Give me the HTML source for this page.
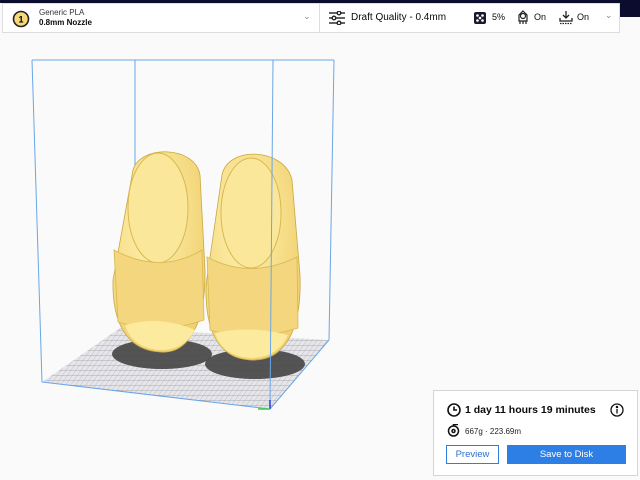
<!DOCTYPE html>
<html><head><meta charset="utf-8"><style>
body{margin:0;width:640px;height:480px;background:#fafafa;font-family:"Liberation Sans",sans-serif;position:relative;overflow:hidden;color:#0a0a0a}
.top{position:absolute;left:0;top:0;width:640px;height:3px;background:#0b0c2e}
.topr{position:absolute;left:620px;top:0;width:20px;height:17px;background:#0b0c2e}
.hdr{position:absolute;left:2px;top:3px;width:618px;height:30px;background:#fff;border:1px solid #ddd;box-sizing:border-box}
.t{position:absolute;white-space:nowrap}
.card{position:absolute;left:433px;top:390px;width:205px;height:86px;background:#fff;border:1px solid #d5d5d5;box-sizing:border-box}
</style></head><body>
<div class="top"></div><div class="topr"></div>
<div class="hdr">
 <svg style="position:absolute;left:9px;top:6px" width="18" height="18"><circle cx="9" cy="9" r="7.5" fill="#f5d97a" stroke="#222" stroke-width="1.6"/><text x="9" y="12.5" font-size="9" text-anchor="middle" font-family="Liberation Sans" font-weight="bold">1</text></svg>
 <div class="t" style="left:36px;top:4px;font-size:8px;color:#333">Generic PLA</div>
 <div class="t" style="left:36px;top:14px;font-size:8px;font-weight:bold">0.8mm Nozzle</div>
 <div class="t" style="left:300px;top:7px;font-size:9px;color:#888">⌄</div>
 <div style="position:absolute;left:316px;top:0;width:1px;height:28px;background:#ddd"></div>
 <svg style="position:absolute;left:326px;top:7px" width="16" height="14" stroke="#222" stroke-width="1.4"><line x1="0" y1="2" x2="16" y2="2"/><line x1="0" y1="7" x2="16" y2="7"/><line x1="0" y1="12" x2="16" y2="12"/><circle cx="10" cy="2" r="1.8" fill="#fff"/><circle cx="5" cy="7" r="1.8" fill="#fff"/><circle cx="10" cy="12" r="1.8" fill="#fff"/></svg>
 <div class="t" style="left:348px;top:8px;font-size:10px">Draft Quality - 0.4mm</div>
 <svg style="position:absolute;left:471px;top:8px" width="12" height="12"><rect width="12" height="12" rx="2" fill="#1a1a2e"/><circle cx="3.5" cy="3.5" r="1.3" fill="#fff"/><circle cx="8.5" cy="3.5" r="1.3" fill="#fff"/><circle cx="6" cy="6" r="1.3" fill="#fff"/><circle cx="3.5" cy="8.5" r="1.3" fill="#fff"/><circle cx="8.5" cy="8.5" r="1.3" fill="#fff"/></svg>
 <div class="t" style="left:489px;top:8px;font-size:9px">5%</div>
 <svg style="position:absolute;left:513px;top:6px" width="14" height="15" fill="none" stroke="#222" stroke-width="1.2"><path d="M7 1 L11 5 L11 11 L3 11 L3 5Z"/><circle cx="7" cy="6" r="2.5"/><path d="M4 11v3M7 11v3M10 11v3"/></svg>
 <div class="t" style="left:531px;top:8px;font-size:9px">On</div>
 <svg style="position:absolute;left:556px;top:6px" width="14" height="15" fill="none" stroke="#222" stroke-width="1.3"><path d="M7 1v7M4 5l3 3 3-3"/><path d="M1 8v3h12V8"/><path d="M1 13.5h12" stroke-dasharray="1.5 1"/></svg>
 <div class="t" style="left:574px;top:8px;font-size:9px">On</div>
 <div class="t" style="left:602px;top:6px;font-size:9px;color:#888">⌄</div>
</div>

<svg style="position:absolute;left:0;top:0" width="640" height="480">
 <defs>
  <pattern id="g" width="5" height="5" patternUnits="userSpaceOnUse" patternTransform="skewX(-35)"><rect width="5" height="5" fill="#e6e6ea"/><path d="M0 0H5M0 0V5" stroke="#8a8a95" stroke-width="0.5"/></pattern>
  <radialGradient id="y" cx="0.4" cy="0.35" r="0.7"><stop offset="0" stop-color="#fff2b0"/><stop offset="1" stop-color="#f0d070"/></radialGradient>
 </defs>
 <polygon points="42,382 120,328 329,340 270,409" fill="url(#g)"/>
 <g stroke="#6aa6e6" stroke-width="1" fill="none">
  <line x1="32" y1="60" x2="334" y2="60"/><line x1="32" y1="60" x2="42" y2="382"/>
  <line x1="334" y1="60" x2="329" y2="340"/><line x1="135" y1="60" x2="135" y2="330"/>
  <line x1="42" y1="382" x2="270" y2="409"/><line x1="270" y1="409" x2="329" y2="340"/>
 </g>
 <ellipse cx="162" cy="354" rx="50" ry="15" fill="#444" opacity="0.9"/>
 <ellipse cx="255" cy="364" rx="50" ry="15" fill="#444" opacity="0.9"/>
 <path d="M133 170 C140 145 195 145 200 175 L205 270 C206 320 190 355 160 352 C125 350 112 320 113 280 Z" fill="url(#y)" stroke="#c9a840" stroke-width="0.8"/>
 <ellipse cx="158" cy="208" rx="30" ry="55" fill="#fbe79a" stroke="#d8b850" stroke-width="1"/>
 <path d="M114 250 Q160 275 202 250 L204 320 Q160 335 118 322Z" fill="#f3d67d" stroke="#d8b850" stroke-width="0.8"/>
 <path d="M125 325 Q160 315 195 330 Q185 350 160 350 Q132 348 125 325Z" fill="#fcea9e"/>
 <path d="M222 175 C228 145 285 148 292 180 L300 275 C302 330 285 362 250 360 C215 358 205 325 206 285 Z" fill="url(#y)" stroke="#c9a840" stroke-width="0.8"/>
 <ellipse cx="251" cy="213" rx="30" ry="55" fill="#fbe79a" stroke="#d8b850" stroke-width="1"/>
 <path d="M207 257 Q250 280 297 257 L298 328 Q250 343 210 330Z" fill="#f3d67d" stroke="#d8b850" stroke-width="0.8"/>
 <path d="M215 333 Q250 325 288 335 Q278 358 250 358 Q222 356 215 333Z" fill="#fcea9e"/>
 <line x1="273" y1="60" x2="270" y2="409" stroke="#6aa6e6" stroke-width="1"/>
 <line x1="270" y1="400" x2="270" y2="409" stroke="#2040e0" stroke-width="1.5"/>
 <line x1="258" y1="409" x2="270" y2="409" stroke="#40d040" stroke-width="1.5"/>
</svg>

<div class="card">
 <svg style="position:absolute;left:13px;top:12px" width="14" height="14" fill="none" stroke="#111" stroke-width="1.6"><circle cx="7" cy="7" r="6"/><path d="M7 3.5V7H10"/></svg>
 <div class="t" style="left:31px;top:13px;font-size:10.5px;font-weight:bold">1 day 11 hours 19 minutes</div>
 <svg style="position:absolute;left:176px;top:12px" width="14" height="14" fill="none" stroke="#111" stroke-width="1.3"><circle cx="7" cy="7" r="6"/><path d="M7 6v4.5"/><circle cx="7" cy="4" r="0.6" fill="#111"/></svg>
 <svg style="position:absolute;left:13px;top:33px" width="13" height="13" fill="none" stroke="#111" stroke-width="1.5"><circle cx="6.5" cy="7" r="5"/><circle cx="6.5" cy="7" r="1.5"/><path d="M6.5 2V0.5H11"/></svg>
 <div class="t" style="left:31px;top:36px;font-size:8px;color:#222">667g · 223.69m</div>
 <div style="position:absolute;left:12px;top:54px;width:53px;height:19px;border:1px solid #2d7fdf;box-sizing:border-box;color:#2d6fcf;font-size:9.5px;text-align:center;line-height:17px">Preview</div>
 <div style="position:absolute;left:73px;top:54px;width:119px;height:19px;background:#2d7fe6;color:#fff;font-size:9.5px;text-align:center;line-height:19px">Save to Disk</div>
</div>
</body></html>
